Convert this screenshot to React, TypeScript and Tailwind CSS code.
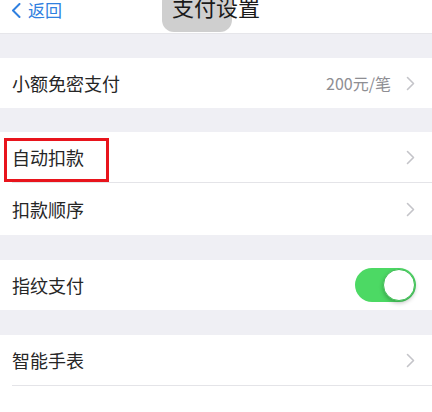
import React from 'react';

const font = { fontFamily: '"Noto Sans CJK SC", "Noto Sans", sans-serif' };

function Chevron() {
  return (
    <svg width="9" height="15" viewBox="0 0 9 15" className="shrink-0">
      <polyline points="1.5,1.5 7.5,7.5 1.5,13.5" fill="none" stroke="#c4c4c9" strokeWidth="1.6" strokeLinecap="round" strokeLinejoin="round" />
    </svg>
  );
}

function Gap() {
  return <div className="h-[24px] bg-[#efeff4]" />;
}

function Row({ label, value, toggle, separator }: { label: string; value?: string; toggle?: boolean; separator?: boolean }) {
  return (
    <div className="bg-white">
      <div className="flex h-[50px] items-center pl-[12px] pr-[17px]">
        <span className="flex-1 text-[18px] text-[#262626] leading-none">{label}</span>
        {value && <span className="mr-[15px] text-[16px] text-[#8e8e93] leading-none">{value}</span>}
        {toggle ? (
          <div className="mr-[-1px] flex h-[34px] w-[61px] items-center justify-end rounded-full bg-[#4cd964] pr-[1px]">
            <div className="h-[32px] w-[32px] rounded-full border border-[#3fbf55] bg-white shadow-[0_2px_4px_rgba(0,0,0,0.25)]" />
          </div>
        ) : (
          <Chevron />
        )}
      </div>
      {separator && <div className="ml-[12px] h-px bg-[#e4e4e8]" />}
    </div>
  );
}

export default function App() {
  return (
    <div className="h-[412px] w-[432px] overflow-hidden bg-white" style={font}>
      <div className="relative flex h-[34px] items-start border-b border-[#e6e6ea] bg-white">
        <div className="absolute left-[162px] top-[-10px] h-[42px] w-[70px] rounded-[12px] bg-[#cfcfcf]" />
        <div className="relative flex items-center pl-[11px] pt-[1px] text-[17px] leading-[17px] text-[#2f80e0]">
          <svg width="10" height="15" viewBox="0 0 10 15" className="mr-[7px] mt-[1px]">
            <polyline points="8.5,1 2,7.5 8.5,14" fill="none" stroke="#2f80e0" strokeWidth="2" strokeLinecap="round" strokeLinejoin="round" />
          </svg>
          <span>返回</span>
        </div>
        <div className="absolute inset-x-0 top-[-5px] text-center text-[22px] leading-[22px] text-[#1a1a1a]">支付设置</div>
      </div>
      <Gap />
      <Row label="小额免密支付" value="200元/笔" />
      <Gap />
      <div className="relative">
        <Row label="自动扣款" separator />
        <div className="absolute left-[4px] top-[6px] h-[44px] w-[105px] border-[3px] border-[#e8141c]" />
      </div>
      <div className="bg-white">
        <div className="flex h-[52px] items-center pl-[12px] pr-[17px]">
          <span className="flex-1 text-[18px] text-[#262626] leading-none">扣款顺序</span>
          <Chevron />
        </div>
      </div>
      <div className="h-[25px] bg-[#efeff4]" />
      <Row label="指纹支付" toggle />
      <div className="h-[25px] bg-[#efeff4]" />
      <Row label="智能手表" separator />
    </div>
  );
}
